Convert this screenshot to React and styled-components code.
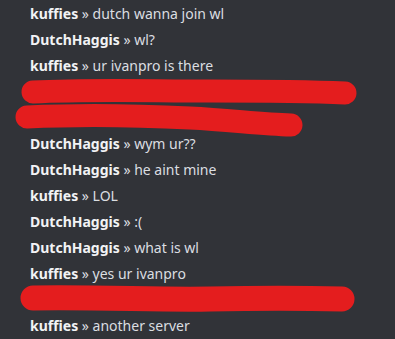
import React from "react";
import styled, { createGlobalStyle } from "styled-components";

const GlobalStyle = createGlobalStyle`
  body {
    margin: 0;
    background: #313338;
  }
`;

const Chat = styled.div`
  position: relative;
  width: 395px;
  height: 339px;
  padding: 1px 0 0 30px;
  box-sizing: border-box;
  background: #313338;
  overflow: hidden;
  font-family: "Noto Sans", "Open Sans", sans-serif;
  font-size: 14px;
`;

const Row = styled.div`
  height: 26px;
  line-height: 26px;
  color: #dbdee1;
  white-space: nowrap;
`;

const Name = styled.span`
  font-weight: 700;
  color: #f2f3f5;
`;

const Redactions = styled.svg`
  position: absolute;
  left: 0;
  top: 0;
  pointer-events: none;
`;

const messages = [
  { name: "kuffies", text: "dutch wanna join wl" },
  { name: "DutchHaggis", text: "wl?" },
  { name: "kuffies", text: "ur ivanpro is there" },
  { hidden: true },
  { hidden: true },
  { name: "DutchHaggis", text: "wym ur??" },
  { name: "DutchHaggis", text: "he aint mine" },
  { name: "kuffies", text: "LOL" },
  { name: "DutchHaggis", text: ":(" },
  { name: "DutchHaggis", text: "what is wl" },
  { name: "kuffies", text: "yes ur ivanpro" },
  { hidden: true },
  { name: "kuffies", text: "another server" },
];

const Message = ({ name, text }) => (
  <Row>
    <Name>{name}</Name> » {text}
  </Row>
);

const App = () => {
  return (
    <>
      <GlobalStyle />
      <Chat>
        {messages.map((m, i) =>
          m.hidden ? <Row key={i} /> : <Message key={i} name={m.name} text={m.text} />
        )}
        <Redactions width="395" height="339" viewBox="0 0 395 339">
          <g fill="none" stroke="#e41d1e" strokeLinecap="round" strokeLinejoin="round">
            <path d="M33 92 C 90 89, 150 91, 210 91 S 300 91, 345 93" strokeWidth="23" />
            <path d="M27 117 C 90 114, 150 116, 190 118 S 260 124, 291 125" strokeWidth="23" />
            <path d="M33 298 C 100 297, 160 300, 210 299 S 300 298, 342 299" strokeWidth="25" />
          </g>
        </Redactions>
      </Chat>
    </>
  );
};

export default App;
